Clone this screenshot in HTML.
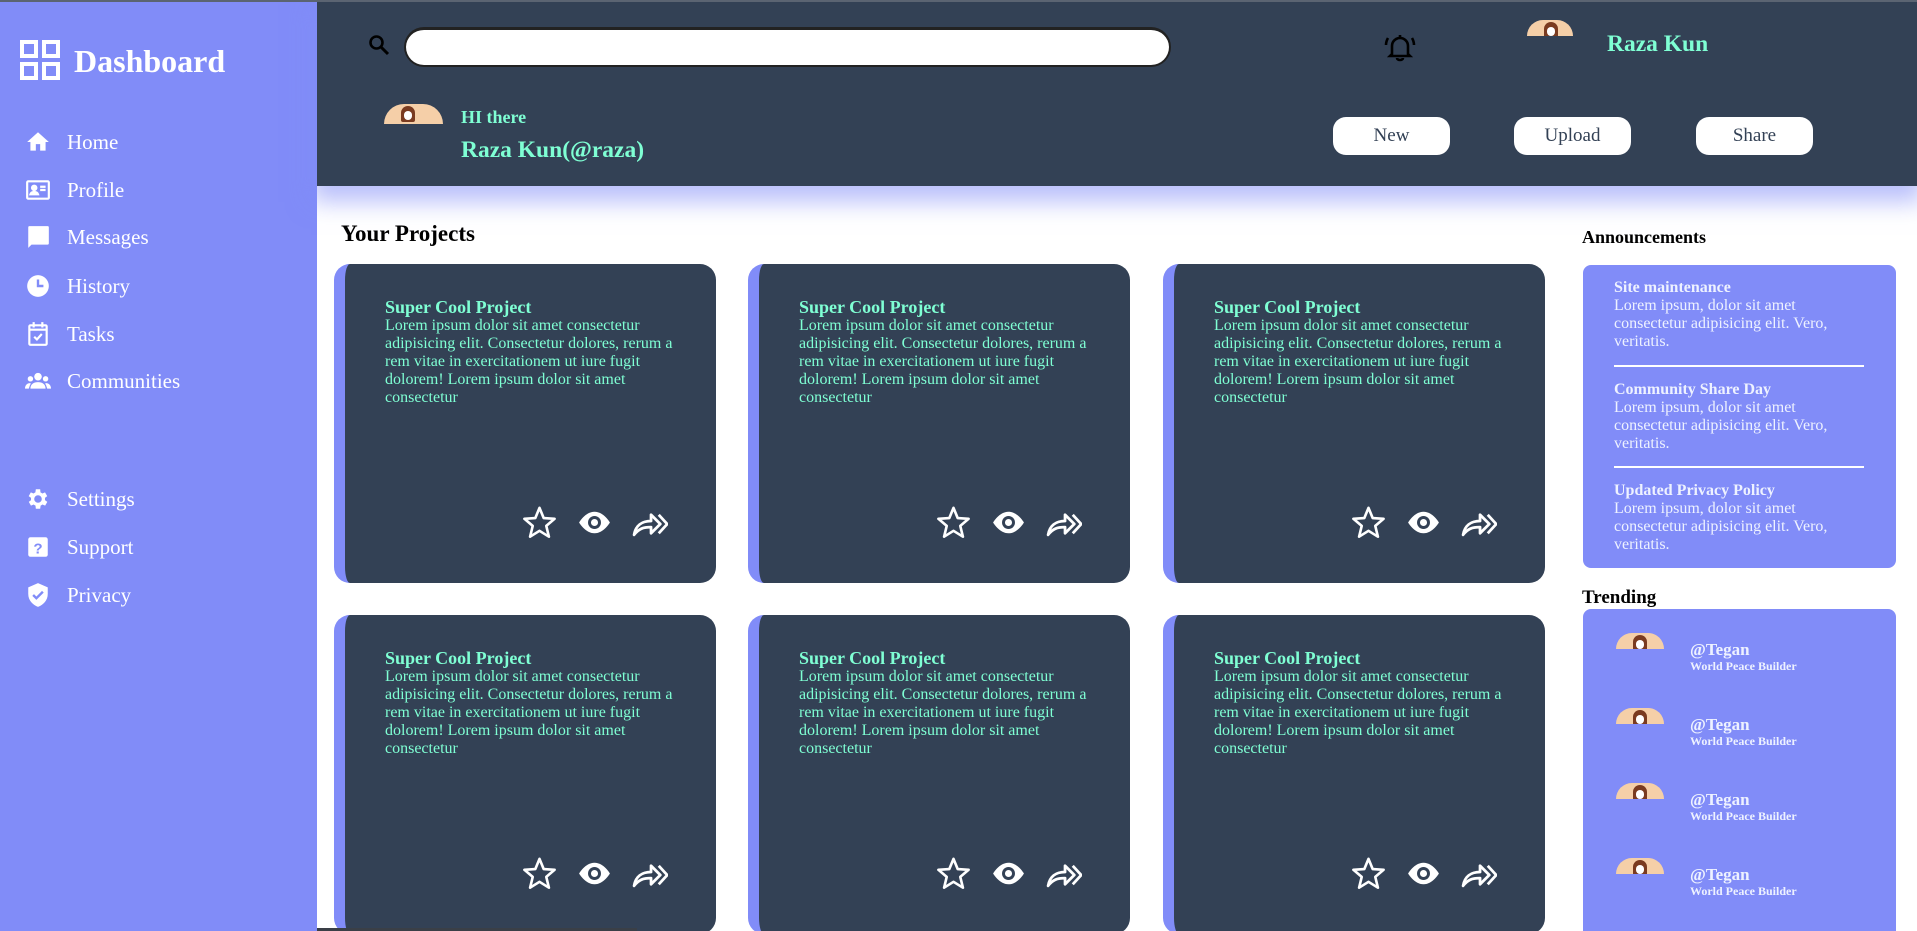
<!DOCTYPE html>
<html><head><meta charset="utf-8"><style>
*{margin:0;padding:0;box-sizing:border-box}
html,body{width:1917px;height:931px;overflow:hidden}
body{background:#fff;font-family:"Liberation Serif",serif}
#wrap{position:relative;width:1917px;height:931px;overflow:hidden}
.abs{position:absolute}
#top{left:0;top:0;width:1917px;height:2px;background:#5b6472;z-index:5}
#side{left:0;top:0;width:317px;height:931px;background:#818cf8}
#hdr{left:317px;top:0;width:1600px;height:186px;background:#334155;box-shadow:0 10px 22px 6px rgba(129,140,248,.55)}
.nav{position:absolute;left:25px;height:30px;display:flex;align-items:center;color:#fff;font-size:21px}
.nav svg{width:26px;height:26px;margin-right:16px}
.aq{color:#7fffd4}
.btn{position:absolute;top:117px;width:117px;height:38px;background:#fff;border-radius:13px;color:#334155;font-size:19px;display:flex;align-items:center;justify-content:center}
.card{position:absolute;width:382px;height:319px;background:#334155;border-radius:16px;border-left:11px solid #818cf8}
.card h3{position:absolute;left:40px;top:33px;color:#7fffd4;font-size:18px;font-weight:bold;line-height:20px}
.card p{position:absolute;left:40px;top:53px;width:300px;color:#7fffd4;font-size:16px;line-height:18px}
.card .ic{position:absolute;left:176px;top:240px;display:flex;gap:18px}
.card .ic svg{width:37px;height:37px}
.box{position:absolute;left:1583px;width:313px;background:#818cf8;border-radius:8px;color:#eef2ff}
.ann{position:absolute;left:31px;width:250px;font-size:16px;line-height:18px}
.ann b{display:block}
.hr{position:absolute;left:31px;width:250px;height:2px;background:#fff}
.av{position:absolute;width:48px;height:16px;border-radius:24px 24px 0 0;background:#f5cfa8;overflow:hidden}
.av:after{content:"";position:absolute;left:17px;top:2px;width:14px;height:16px;border-radius:7px 7px 2px 2px;background:#7a3b20}
.av:before{content:"";position:absolute;left:20px;top:7px;width:8px;height:9px;border-radius:4px;background:#fff;z-index:2}
.tr{position:absolute;left:107px;color:#eef2ff}
.tr b{display:block;font-size:17px;line-height:18px}
.tr small{display:block;font-size:12px;font-weight:bold;line-height:14px}
</style></head><body><div id="wrap">
<div id="top" class="abs"></div>
<div id="side" class="abs">
 <svg class="abs" style="left:20px;top:40px" width="40" height="40" viewBox="0 0 40 40" fill="none" stroke="#fff" stroke-width="4"><rect x="2" y="2" width="14" height="14"/><rect x="24" y="2" width="14" height="14"/><rect x="2" y="24" width="14" height="14"/><rect x="24" y="24" width="14" height="14"/></svg>
 <div class="abs" style="left:74px;top:41px;font-size:32px;font-weight:bold;color:#fff;line-height:40px">Dashboard</div>
 <div class="nav" style="top:127px"><svg viewBox="0 0 24 24" fill="#fff"><path d="M10 20v-6h4v6h5v-8h3L12 3 2 12h3v8z"/></svg>Home</div>
 <div class="nav" style="top:175px"><svg viewBox="0 0 24 24" fill="none" stroke="#fff" stroke-width="2"><rect x="2" y="4" width="20" height="16" rx="1"/><circle cx="8.5" cy="10" r="2" fill="#fff"/><path d="M5 16c1-3 6-3 7 0z" fill="#fff"/><path d="M14 9h5M14 12h5"/></svg>Profile</div>
 <div class="nav" style="top:222px"><svg viewBox="0 0 24 24" fill="#fff"><path d="M3 2h18a1 1 0 0 1 1 1v15a1 1 0 0 1-1 1H6l-3 3V3a1 1 0 0 1 1-1z"/></svg>Messages</div>
 <div class="nav" style="top:271px"><svg viewBox="0 0 24 24"><circle cx="12" cy="12" r="10" fill="#fff"/><path d="M12 6v6h5" stroke="#818cf8" stroke-width="2.2" fill="none"/></svg>History</div>
 <div class="nav" style="top:319px"><svg viewBox="0 0 24 24" fill="none" stroke="#fff" stroke-width="2"><rect x="4" y="4" width="16" height="18" rx="1"/><path d="M8 1v5M16 1v5M4 8h16" /><path d="M8.5 14.5l2.5 2.5 4.5-5"/></svg>Tasks</div>
 <div class="nav" style="top:366px"><svg viewBox="0 0 24 24" fill="#fff"><circle cx="12" cy="8" r="3.5"/><circle cx="5" cy="10" r="2.5"/><circle cx="19" cy="10" r="2.5"/><path d="M5 19c0-4 3-6 7-6s7 2 7 6zM0 19c0-3 2-5 4.5-5 1 0 1 .5 0 2L3.5 19zM24 19c0-3-2-5-4.5-5-1 0-1 .5 0 2l1 3z"/></svg>Communities</div>
 <div class="nav" style="top:484px"><svg viewBox="0 0 24 24" fill="#fff"><path d="M19.4 13a7.5 7.5 0 0 0 0-2l2.1-1.6-2-3.5-2.5 1a7 7 0 0 0-1.7-1L15 3h-4l-.4 2.9a7 7 0 0 0-1.7 1l-2.5-1-2 3.5L6.6 11a7.5 7.5 0 0 0 0 2l-2.1 1.6 2 3.5 2.5-1a7 7 0 0 0 1.7 1L11 21h4l.4-2.9a7 7 0 0 0 1.7-1l2.5 1 2-3.5zM13 15.5a3.5 3.5 0 1 1 0-7 3.5 3.5 0 0 1 0 7z" transform="translate(-1 0)"/></svg>Settings</div>
 <div class="nav" style="top:532px"><svg viewBox="0 0 24 24"><rect x="3" y="3" width="18" height="18" rx="2" fill="#fff"/><text x="12" y="18" font-size="14" font-weight="bold" text-anchor="middle" fill="#818cf8" font-family="Liberation Sans">?</text></svg>Support</div>
 <div class="nav" style="top:580px"><svg viewBox="0 0 24 24"><path d="M12 1l9 4v6c0 6-4 10-9 12-5-2-9-6-9-12V5z" fill="#fff"/><path d="M7.5 12l3 3 6-6" stroke="#818cf8" stroke-width="2.2" fill="none"/></svg>Privacy</div>
</div>
<div id="hdr" class="abs"></div>
<svg class="abs" style="left:367px;top:33px" width="24" height="24" viewBox="0 0 24 24"><circle cx="9.5" cy="9.5" r="6" stroke="#000" stroke-width="2.6" fill="none"/><path d="M14 14l7 7" stroke="#000" stroke-width="3"/></svg>
<div class="abs" style="left:404px;top:27px;width:767px;height:40px;background:#fff;border-radius:20px;border:2px solid #222;border-top-width:3px"></div>
<svg class="abs" style="left:1383px;top:31px" width="34" height="32" viewBox="0 0 34 32" fill="none" stroke="#000" stroke-width="2.6"><path d="M9 23V15a8 8 0 0 1 16 0v8l2 2H7z"/><path d="M17 4v3M14 27a3 2 0 0 0 6 0"/><path d="M5 7a14 14 0 0 0-2 7M29 7a14 14 0 0 1 2 7"/></svg>
<div class="av" style="left:1527px;top:20px;width:46px"></div>
<div class="abs aq" style="left:1607px;top:31px;font-size:23.5px;font-weight:bold">Raza Kun</div>
<div class="av" style="left:384px;top:104px;width:59px;height:20px;border-radius:30px 30px 0 0"></div>
<div class="abs aq" style="left:461px;top:107px;font-size:18px;font-weight:bold">HI there</div>
<div class="abs aq" style="left:461px;top:137px;font-size:23.5px;font-weight:bold">Raza Kun(@raza)</div>
<div class="btn" style="left:1333px">New</div>
<div class="btn" style="left:1514px">Upload</div>
<div class="btn" style="left:1696px">Share</div>
<div class="abs" style="left:341px;top:221px;font-size:23px;font-weight:bold">Your Projects</div>

<svg width="0" height="0" style="position:absolute"><defs>
<symbol id="st" viewBox="0 0 24 24"><path d="M12 2.5l2.7 6.6 7.1.5-5.4 4.6 1.7 7L12 17.4l-6.1 3.8 1.7-7L2.2 9.6l7.1-.5z" fill="none" stroke="#fff" stroke-width="1.7" stroke-linejoin="round"/></symbol>
<symbol id="ey" viewBox="0 0 24 24"><path d="M12 5C6 5 2 12 2 12s4 7 10 7 10-7 10-7-4-7-10-7z" fill="#fff"/><circle cx="12" cy="12" r="4.2" fill="#334155"/><circle cx="12" cy="12" r="2.3" fill="#fff"/></symbol>
<symbol id="sh" viewBox="0 0 24 24"><path d="M2 20c1-6 5-9 11-9V7l6 6-6 6v-4c-5 0-8 1-11 5z" fill="none" stroke="#fff" stroke-width="1.8" stroke-linejoin="round"/><path d="M18 7l5.5 6-5.5 6" fill="none" stroke="#fff" stroke-width="1.8"/></symbol>
</defs></svg>

<div class="card" style="left:334px;top:264px"><h3>Super Cool Project</h3><p>Lorem ipsum dolor sit amet consectetur adipisicing elit. Consectetur dolores, rerum a rem vitae in exercitationem ut iure fugit dolorem! Lorem ipsum dolor sit amet consectetur</p><div class="ic"><svg><use href="#st"/></svg><svg><use href="#ey"/></svg><svg><use href="#sh"/></svg></div></div>
<div class="card" style="left:748px;top:264px"><h3>Super Cool Project</h3><p>Lorem ipsum dolor sit amet consectetur adipisicing elit. Consectetur dolores, rerum a rem vitae in exercitationem ut iure fugit dolorem! Lorem ipsum dolor sit amet consectetur</p><div class="ic"><svg><use href="#st"/></svg><svg><use href="#ey"/></svg><svg><use href="#sh"/></svg></div></div>
<div class="card" style="left:1163px;top:264px"><h3>Super Cool Project</h3><p>Lorem ipsum dolor sit amet consectetur adipisicing elit. Consectetur dolores, rerum a rem vitae in exercitationem ut iure fugit dolorem! Lorem ipsum dolor sit amet consectetur</p><div class="ic"><svg><use href="#st"/></svg><svg><use href="#ey"/></svg><svg><use href="#sh"/></svg></div></div>
<div class="card" style="left:334px;top:615px"><h3>Super Cool Project</h3><p>Lorem ipsum dolor sit amet consectetur adipisicing elit. Consectetur dolores, rerum a rem vitae in exercitationem ut iure fugit dolorem! Lorem ipsum dolor sit amet consectetur</p><div class="ic"><svg><use href="#st"/></svg><svg><use href="#ey"/></svg><svg><use href="#sh"/></svg></div></div>
<div class="card" style="left:748px;top:615px"><h3>Super Cool Project</h3><p>Lorem ipsum dolor sit amet consectetur adipisicing elit. Consectetur dolores, rerum a rem vitae in exercitationem ut iure fugit dolorem! Lorem ipsum dolor sit amet consectetur</p><div class="ic"><svg><use href="#st"/></svg><svg><use href="#ey"/></svg><svg><use href="#sh"/></svg></div></div>
<div class="card" style="left:1163px;top:615px"><h3>Super Cool Project</h3><p>Lorem ipsum dolor sit amet consectetur adipisicing elit. Consectetur dolores, rerum a rem vitae in exercitationem ut iure fugit dolorem! Lorem ipsum dolor sit amet consectetur</p><div class="ic"><svg><use href="#st"/></svg><svg><use href="#ey"/></svg><svg><use href="#sh"/></svg></div></div>

<div class="abs" style="left:1582px;top:227px;font-size:18px;font-weight:bold">Announcements</div>
<div class="box" style="top:265px;height:303px">
 <div class="ann" style="top:14px"><b>Site maintenance</b>Lorem ipsum, dolor sit amet consectetur adipisicing elit. Vero, veritatis.</div>
 <div class="hr" style="top:100px"></div>
 <div class="ann" style="top:116px"><b>Community Share Day</b>Lorem ipsum, dolor sit amet consectetur adipisicing elit. Vero, veritatis.</div>
 <div class="hr" style="top:201px"></div>
 <div class="ann" style="top:217px"><b>Updated Privacy Policy</b>Lorem ipsum, dolor sit amet consectetur adipisicing elit. Vero, veritatis.</div>
</div>
<div class="abs" style="left:1582px;top:587px;font-size:19px;font-weight:bold">Trending</div>
<div class="box" style="top:609px;height:340px">
 <div class="av" style="left:33px;top:24px"></div><div class="tr" style="top:32px"><b>@Tegan</b><small>World Peace Builder</small></div>
 <div class="av" style="left:33px;top:99px"></div><div class="tr" style="top:107px"><b>@Tegan</b><small>World Peace Builder</small></div>
 <div class="av" style="left:33px;top:174px"></div><div class="tr" style="top:182px"><b>@Tegan</b><small>World Peace Builder</small></div>
 <div class="av" style="left:33px;top:249px"></div><div class="tr" style="top:257px"><b>@Tegan</b><small>World Peace Builder</small></div>
</div>
<div class="abs" style="left:317px;top:928px;width:320px;height:3px;background:#3a3f47"></div>
</div></body></html>
